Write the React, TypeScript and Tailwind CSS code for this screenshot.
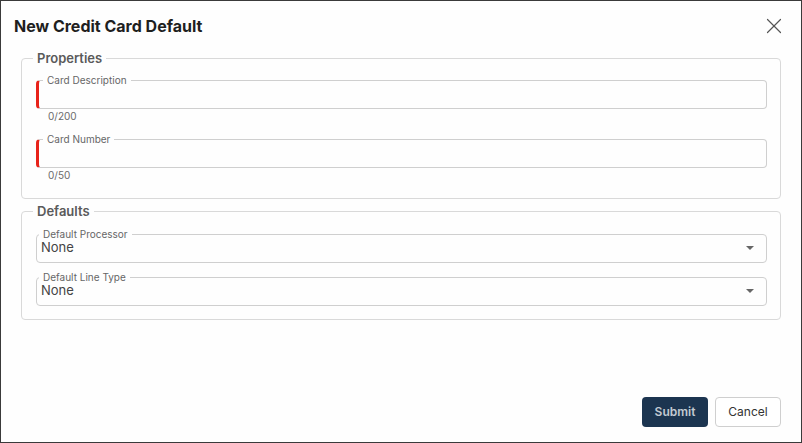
import { X } from 'lucide-react';

const font = { fontFamily: 'Inter, "Liberation Sans", sans-serif' };

function TextField({ label, count }: { label: string; count: string }) {
  return (
    <div>
      <fieldset className="rounded-[4px] border border-l-[3px] border-[#cfcfcf] border-l-[#e8231a]">
        <legend className="ml-[4px] px-[4px] text-[10px] leading-[12px] text-[#666]">
          {label}
        </legend>
        <div className="h-[22px]" />
      </fieldset>
      <p className="pl-[12px] pt-[1px] text-[10px] leading-[12px] text-[#6b6b6b]">{count}</p>
    </div>
  );
}

function SelectField({ label }: { label: string }) {
  return (
    <fieldset className="rounded-[4px] border border-[#cfcfcf]">
      <legend className="ml-[2px] px-[4px] text-[10px] leading-[12px] text-[#666]">
        {label}
      </legend>
      <div className="flex h-[22px] items-start justify-between pl-[4px] pr-[12px]">
        <span className="text-[13px] leading-[15px] text-[#444]">None</span>
        <svg width="8" height="4" viewBox="0 0 8 4" className="mt-[6px]">
          <path d="M0 0 L8 0 L4 4 Z" fill="#666" />
        </svg>
      </div>
    </fieldset>
  );
}

export default function App() {
  return (
    <div
      className="flex h-[443px] w-[802px] flex-col border border-[#3a3a3a] bg-[#fefefe]"
      style={font}
    >
      <div className="flex h-[49px] items-start justify-between pl-[13px] pr-[14px] pt-[15px]">
        <h1 className="text-[16px] font-bold leading-[20px] text-[#1f1f1f]">
          New Credit Card Default
        </h1>
        <X size={26} strokeWidth={1.1} className="-mt-[3px] text-[#555]" />
      </div>

      <fieldset className="mx-[20px] rounded-[4px] border border-[#d9d9d9] pb-[17px] pl-[14px] pr-[13px]">
        <legend className="-ml-[3px] px-[4px] text-[13px] font-semibold leading-[16px] text-[#5a5a5a]">
          Properties
        </legend>
        <div className="flex flex-col gap-[11px] pt-[8px]">
          <TextField label="Card Description" count="0/200" />
          <TextField label="Card Number" count="0/50" />
        </div>
      </fieldset>

      <fieldset className="mx-[20px] mt-[4px] rounded-[4px] border border-[#d9d9d9] pb-[13px] pl-[14px] pr-[13px]">
        <legend className="-ml-[3px] px-[4px] text-[13px] font-semibold leading-[16px] text-[#5a5a5a]">
          Defaults
        </legend>
        <div className="flex flex-col gap-[8px] pt-[9px]">
          <SelectField label="Default Processor" />
          <SelectField label="Default Line Type" />
        </div>
      </fieldset>

      <div className="flex-1" />

      <div className="flex justify-end gap-[7px] pb-[15px] pr-[20px]">
        <button className="h-[30px] w-[66px] rounded-[4px] bg-[#1c3550] text-[12px] font-semibold text-[#c3cad2]">
          Submit
        </button>
        <button className="h-[30px] w-[66px] rounded-[4px] border border-[#cfcfcf] bg-white text-[12px] text-[#333]">
          Cancel
        </button>
      </div>
    </div>
  );
}
